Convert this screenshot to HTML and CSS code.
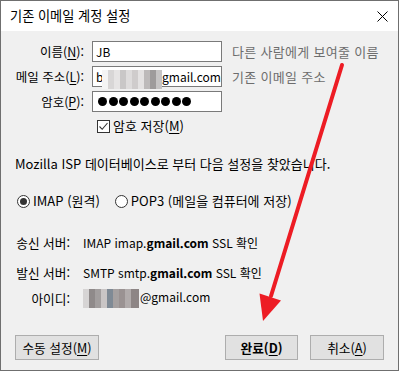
FILE: index.html
```html
<!DOCTYPE html>
<html lang="ko">
<head>
    <meta charset="UTF-8">
    <title>기존 이메일 계정 설정</title>
    <link rel="stylesheet" href="styles.css">
</head>
<body>
    <div class="window">
        <div class="titlebar">
            <span class="title">기존 이메일 계정 설정</span>
            <svg class="close" width="11" height="11" viewBox="0 0 11 11">
                <path d="M0.5 0.5 L10.5 10.5 M10.5 0.5 L0.5 10.5" stroke="#000" stroke-width="1" fill="none"/>
            </svg>
        </div>

        <div class="content">
            <!-- account fields -->
            <div class="form">
                <label class="label">이름(<u>N</u>):</label>
                <div class="field">JB</div>
                <span class="hint">다른 사람에게 보여줄 이름</span>

                <label class="label">메일 주소(<u>L</u>):</label>
                <div class="field field-email"><span class="first">b</span><span class="blur blur-email"></span>gmail.com</div>
                <span class="hint">기존 이메일 주소</span>

                <label class="label">암호(<u>P</u>):</label>
                <div class="field field-pass">
                    <span class="dot"></span><span class="dot"></span><span class="dot"></span>
                    <span class="dot"></span><span class="dot"></span><span class="dot"></span>
                    <span class="dot"></span><span class="dot"></span><span class="dot"></span>
                </div>
                <span></span>
            </div>

            <div class="remember">
                <span class="checkbox">
                    <svg width="11" height="11" viewBox="0 0 11 11">
                        <path d="M1.5 5.5 L4.2 8.3 L9.5 2" stroke="#333" stroke-width="1.1" fill="none"/>
                    </svg>
                </span>
                <span>암호 저장(<u>M</u>)</span>
            </div>

            <p class="found">Mozilla ISP 데이터베이스로 부터 다음 설정을 찾았습니다.</p>

            <div class="protocols">
                <span class="radio checked"></span><span>IMAP (원격)</span>
                <span class="radio second"></span><span>POP3 (메일을 컴퓨터에 저장)</span>
            </div>

            <div class="servers">
                <span class="slabel">송신 서버:</span>
                <span>IMAP imap.<b>gmail.com</b> SSL 확인</span>

                <span class="slabel row2">발신 서버:</span>
                <span class="row2">SMTP smtp.<b>gmail.com</b> SSL 확인</span>

                <span class="slabel row3">아이디:</span>
                <span class="row3"><span class="blur blur-id"></span>@gmail.com</span>
            </div>

            <div class="buttons">
                <button class="btn btn-manual">수동 설정(<u>M</u>)</button>
                <button class="btn btn-done">완료(<u>D</u>)</button>
                <button class="btn btn-cancel">취소(<u>A</u>)</button>
            </div>
        </div>

        <svg class="arrow" width="399" height="371" viewBox="0 0 399 371">
            <line x1="342" y1="65" x2="271" y2="296" stroke="#ed1c24" stroke-width="4" stroke-linecap="round"/>
            <polygon points="259.5,293.5 281,300.5 263,321" fill="#ed1c24"/>
        </svg>
    </div>
</body>
</html>
```

FILE: styles.css
```css
* {
    box-sizing: border-box;
}
body {
    margin: 0;
    font-family: "Noto Sans CJK KR", "Noto Sans", sans-serif;
    font-size: 12px;
    color: #000;
}
.window {
    position: relative;
    width: 399px;
    height: 371px;
    border: 1px solid #6f6f6f;
    display: flex;
    flex-direction: column;
}
.titlebar {
    height: 30px;
    background: #fff;
    display: flex;
    align-items: center;
    justify-content: space-between;
    padding: 0 10px 0 9px;
}
.title {
    font-size: 13.2px;
    line-height: 16px;
}
.close {
    display: block;
}
.content {
    flex: 1;
    background: #f0f0f0;
    display: flex;
    flex-direction: column;
    padding: 10px 14px 10px 14px;
}
u {
    text-decoration-thickness: 1px;
    text-underline-offset: 2px;
}

/* account fields */
.form {
    display: grid;
    grid-template-columns: 90px 130px auto;
    grid-auto-rows: 21px;
    row-gap: 4px;
    margin-left: -13px;
}
.label {
    text-align: right;
    padding-right: 8px;
    font-size: 12.5px;
    line-height: 21px;
    white-space: nowrap;
}
.field {
    background: #fff;
    border: 1px solid #7a7a7a;
    line-height: 19px;
    padding-left: 3px;
    white-space: nowrap;
    overflow: hidden;
    display: flex;
    align-items: center;
}
.field-email {
    overflow: visible;
}
.first {
    width: 6px;
}
.hint {
    color: #6d6d6d;
    font-size: 13px;
    letter-spacing: 0.3px;
    line-height: 21px;
    margin-left: 10px;
    white-space: nowrap;
}
.field-pass {
    gap: 1.5px;
    padding-left: 5px;
}
.dot {
    width: 9px;
    height: 9px;
    border-radius: 50%;
    background: #000;
}
.blur {
    display: inline-block;
    height: 19px;
    flex: none;
}
.blur-email {
    width: 60px;
    margin-top: 3px;
    align-self: flex-start;
    background: linear-gradient(90deg, #f4f4f4 0 6px, #d8d6d6 6px 12px, #e6e4e4 12px 18px, #c9c7c7 18px 24px, #dedcdc 24px 30px, #cfcccc 30px 36px, #e4e2e2 36px 42px, #bdbaba 42px 48px, #9e9b9b 48px 54px, #c6c4c4 54px 60px);
}
.blur-id {
    width: 56px;
    vertical-align: middle;
    margin-right: 1px;
    background: linear-gradient(90deg, #d6d4d4 0 6px, #8f8a8a 6px 12px, #a29e9e 12px 18px, #c9c5c5 18px 24px, #7f8a95 24px 30px, #a5a0a0 30px 36px, #9a9292 36px 42px, #b1abab 42px 48px, #8d8585 48px 56px);
}

.remember {
    display: flex;
    align-items: center;
    gap: 3px;
    margin: 6px 0 0 82px;
    font-size: 13px;
    line-height: 16px;
}
.checkbox {
    width: 13px;
    height: 13px;
    border: 1px solid #333;
    background: #fff;
    display: flex;
    align-items: center;
    justify-content: center;
}
.found {
    margin: 22px 0 0 0;
    font-size: 13px;
    line-height: 16px;
}
.protocols {
    display: flex;
    align-items: center;
    margin-top: 21px;
    font-size: 13px;
    line-height: 16px;
    padding-left: 2px;
}
.radio {
    width: 13px;
    height: 13px;
    border: 1px solid #333;
    border-radius: 50%;
    background: #fff;
    margin-right: 3px;
    display: flex;
    align-items: center;
    justify-content: center;
}
.radio.checked::after {
    content: "";
    width: 7px;
    height: 7px;
    border-radius: 50%;
    background: #333;
}
.radio.second {
    margin-left: 15px;
}
.servers {
    display: grid;
    grid-template-columns: 55px auto;
    column-gap: 13px;
    margin-top: 26px;
    line-height: 16px;
    align-items: center;
}
.slabel {
    text-align: right;
    font-size: 12.7px;
    white-space: nowrap;
}
.servers .row2 {
    margin-top: 14px;
}
.servers .row3 {
    margin-top: 8px;
}
.servers b {
    font-weight: bold;
}

.buttons {
    margin-top: auto;
    display: flex;
    gap: 12px;
}
.btn {
    height: 25px;
    background: #e1e1e1;
    border: 1px solid #adadad;
    font-family: inherit;
    font-size: 12.7px;
    color: #000;
    padding: 0;
}
.btn-manual {
    width: 84px;
    margin-right: auto;
}
.btn-done {
    width: 73px;
    font-weight: bold;
}
.btn-cancel {
    width: 74px;
}

.arrow {
    position: absolute;
    top: -1px;
    left: -1px;
    pointer-events: none;
}
```
